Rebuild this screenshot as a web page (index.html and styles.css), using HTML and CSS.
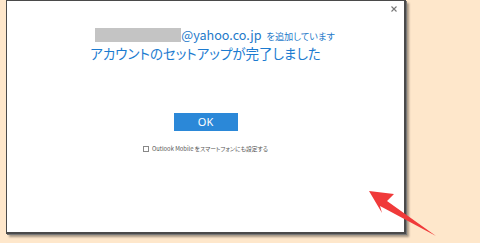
FILE: index.html
```html
<!DOCTYPE html>
<html lang="ja">
<head>
<meta charset="utf-8">
<link rel="stylesheet" href="styles.css">
</head>
<body>
<div class="page">
  <div class="dialog">
    <button class="close" aria-label="閉じる">
      <svg width="6" height="6" viewBox="0 0 6 6"><path d="M0.5 0.5L5.5 5.5M5.5 0.5L0.5 5.5" stroke="#777" stroke-width="1.1"/></svg>
    </button>
    <div class="content">
      <div class="sub"><span class="mask"></span><span class="email">@yahoo.co.jp</span><span class="adding">を追加しています</span></div>
      <h1 class="title">アカウントのセットアップが完了しました</h1>
      <button class="ok">OK</button>
      <label class="check"><span class="box"></span>Outlook Mobile をスマートフォンにも設定する</label>
    </div>
  </div>
  <svg class="arrow" width="480" height="243" viewBox="0 0 480 243">
    <polygon points="369,191 394,194 387,201 436,236 380,206 382,213" fill="#f03a3a"/>
  </svg>
</div>
</body>
</html>
```
FILE: styles.css
```css
html, body {
  margin: 0;
  padding: 0;
}
body {
  background: #fee7cb;
  font-family: "Noto Sans CJK JP", "Noto Sans", sans-serif;
  font-feature-settings: "palt";
  width: 480px;
  height: 243px;
  overflow: hidden;
}
.page {
  position: relative;
  padding-left: 6px;
  height: 243px;
}
.dialog {
  position: relative;
  box-sizing: border-box;
  width: 400px;
  height: 234px;
  background: #fff;
  border: 1px solid #4a4a4a;
  border-right-width: 2px;
  border-bottom-width: 2px;
  box-shadow: 1px 1px 0 #777, 3px 3px 2px rgba(0,0,0,0.35);
}
.close {
  position: absolute;
  top: 4px;
  right: 6px;
  width: 8px;
  height: 8px;
  padding: 1px;
  border: 0;
  background: none;
  line-height: 0;
}
.content {
  display: flex;
  flex-direction: column;
  align-items: center;
  padding-top: 26px;
}
.sub {
  display: flex;
  align-items: flex-end;
  height: 15px;
  margin-left: 19px;
}
.mask {
  display: inline-block;
  width: 86px;
  height: 14px;
  background: #c4c4c4;
}
.email {
  color: #2379c9;
  font-size: 12.6px;
  line-height: 14px;
}
.adding {
  color: #2379c9;
  font-size: 9.2px;
  line-height: 11px;
  margin-left: 5px;
}
.title {
  margin: 3px 0 0;
  font-size: 13.5px;
  line-height: 17px;
  font-weight: normal;
  color: #1c7bd0;
}
.ok {
  margin-top: 51px;
  width: 64px;
  height: 18px;
  border: 0;
  padding: 0;
  background: #2b88d8;
  color: #fff;
  font-family: "Noto Sans", sans-serif;
  font-size: 11px;
  line-height: 18px;
}
.check {
  margin-top: 13px;
  display: flex;
  align-items: center;
  font-size: 5.8px;
  line-height: 9px;
  color: #555;
}
.box {
  display: inline-block;
  box-sizing: border-box;
  width: 6px;
  height: 6px;
  border: 1px solid #888;
  margin-right: 3px;
}
.arrow {
  position: absolute;
  left: 0;
  top: 0;
  pointer-events: none;
}
```
